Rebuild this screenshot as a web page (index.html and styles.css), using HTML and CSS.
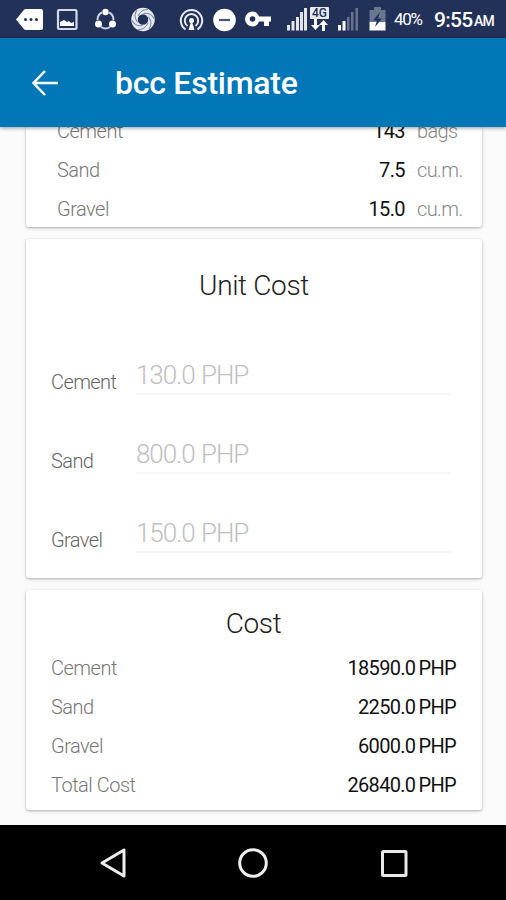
FILE: index.html
```html
<!DOCTYPE html>
<html lang="en">
<head>
<meta charset="utf-8">
<title>bcc Estimate</title>
<link rel="stylesheet" href="styles.css">
</head>
<body>
<div class="screen">
  <div class="status">
    <svg width="28" height="38"><path d="M0 19.500 7 11Q8 9 10 9H25Q27 9 27 11V28Q27 30 25 30H10Q8 30 7 28Z" fill="#fff"/><g fill="#223158"><circle cx="9.500" cy="19.500" r="1.500"/><circle cx="15" cy="19.500" r="1.500"/><circle cx="20.500" cy="19.500" r="1.500"/></g></svg>
    <svg class="picture" width="23" height="38"><rect x="2" y="10" width="18.500" height="19" rx="1" fill="none" stroke="#d5dae8" stroke-width="2.200"/><path d="M4 26V22L8 20 11 22 13 21 15 23 18 22V26Z" fill="#fff"/></svg>
    <svg class="share" width="24" height="38"><path d="M8 12.500Q3.500 14.500 3.500 20M15 12.500Q19.500 14.500 19.500 20M7 27Q11.500 30 16 27" fill="none" stroke="#cbd2e2" stroke-width="2"/><g fill="#fff"><circle cx="11.500" cy="12" r="3.200"/><circle cx="4.500" cy="24" r="3.500"/><circle cx="18.500" cy="24" r="3.500"/></g></svg>
    <svg class="wheel" width="26" height="38"><circle cx="13" cy="19.500" r="8.500" fill="none" stroke="#e6e9f1" stroke-width="6.500"/><g fill="none" stroke="#7d87a0" stroke-width="1"><path id="blade" d="M8 16Q11 9 18 9.500"/><use href="#blade" transform="rotate(60 13 19.500)"/><use href="#blade" transform="rotate(120 13 19.500)"/><use href="#blade" transform="rotate(180 13 19.500)"/><use href="#blade" transform="rotate(240 13 19.500)"/><use href="#blade" transform="rotate(300 13 19.500)"/></g></svg>
    <svg class="hotspot" width="25" height="38"><g fill="none" stroke="#e8ecf5" stroke-width="2"><path d="M6.500 29.500A10.700 10.700 0 1 1 18.500 29.500"/><path d="M8.500 26A6.700 6.700 0 1 1 16.500 26"/></g><circle cx="12.500" cy="20.500" r="2.500" fill="#fff"/><path d="M12.500 20 15.500 30H9.500Z" fill="#fff"/></svg>
    <svg class="minus" width="24" height="38"><circle cx="11.500" cy="20" r="11.300" fill="#fff"/><path d="M6 20H17" stroke="#495575" stroke-width="2.200"/></svg>
    <svg class="key" width="27" height="38"><path fill="#fff" fill-rule="evenodd" d="M7.500 11.500C11 11.500 13 13.500 14 16.500H26V21.500H24V26H19V21.500H14C13 24.500 11 26.500 7.500 26.500A7.500 7.500 0 0 1 7.500 11.500ZM7.500 16.200A2.800 2.800 0 1 0 7.500 21.800 2.800 2.800 0 0 0 7.500 16.200Z"/></svg>
    <svg class="signal" width="22" height="38"><path d="M1 30.500V25H4V30.500ZM5.500 30.500V21H8.500V30.500ZM10 30.500V17H13V30.500ZM14 30.500V12H17V30.500ZM18 30.500V8H21V30.500Z" fill="#e4e5e8"/></svg>
    <span class="network"><span class="network-label">4G</span><svg width="21" height="13"><path d="M5 0H8V6H11L6.500 11 2 6H5ZM13 12V6H10L14.500 1 19 6H16V12Z" fill="#fff"/></svg></span>
    <svg class="signal-two" width="22" height="38"><path d="M1 30.500V25H4V30.500ZM5.500 30.500V21H8.500V30.500Z" fill="#fff"/><path d="M10 30.500V17H12.500V30.500ZM14 30.500V12H16.500V30.500ZM18.500 30.500V8H21V30.500Z" fill="#66728e"/></svg>
    <svg class="battery" width="17" height="38"><path d="M.5 10H5V7H12V10H16.500V22H.5Z" fill="#6a7590"/><path d="M.5 22H16.500V30.500H.5Z" fill="#fff"/><path d="M11 12 4 20.500H8L6 27 13 18.500H9Z" fill="#223158"/></svg>
    <span class="percent">40%</span>
    <span class="clock">9:55</span><span class="ampm">AM</span>
  </div>
  <header class="bar">
    <svg width="28" height="28"><path d="M27 14H3M14 2 2.500 14 14 26" fill="none" stroke="#fff" stroke-width="2.500"/></svg>
    <h1>bcc Estimate</h1>
  </header>
  <main>
    <section class="card quantities">
      <div class="row"><span>Cement</span><b>143</b><i>bags</i></div>
      <div class="row"><span>Sand</span><b>7.5</b><i>cu.m.</i></div>
      <div class="row"><span>Gravel</span><b>15.0</b><i>cu.m.</i></div>
    </section>
    <section class="card unit">
      <h2>Unit Cost</h2>
      <div class="field"><label>Cement</label><div class="input">130.0 PHP</div></div>
      <div class="field"><label>Sand</label><div class="input">800.0 PHP</div></div>
      <div class="field"><label>Gravel</label><div class="input">150.0 PHP</div></div>
    </section>
    <section class="card cost">
      <h2>Cost</h2>
      <div class="row"><span>Cement</span><b>18590.0 PHP</b></div>
      <div class="row"><span>Sand</span><b>2250.0 PHP</b></div>
      <div class="row"><span>Gravel</span><b>6000.0 PHP</b></div>
      <div class="row"><span>Total Cost</span><b>26840.0 PHP</b></div>
    </section>
  </main>
  <nav>
    <svg width="30" height="34"><path d="M26 4V30L4 17Z" fill="none" stroke="#eee" stroke-width="3" stroke-linejoin="round"/></svg>
    <svg width="34" height="34"><circle cx="17" cy="17" r="13.300" fill="none" stroke="#eee" stroke-width="3"/></svg>
    <svg width="34" height="34"><rect x="5.500" y="5.500" width="23.500" height="24" rx="1" fill="none" stroke="#e8e8e8" stroke-width="3"/></svg>
  </nav>
</div>
</body>
</html>
```
FILE: styles.css
```css
* { box-sizing: border-box; }
body { margin: 0; font-family: Roboto, sans-serif; }
.screen { width: 506px; height: 900px; display: flex; flex-direction: column; overflow: hidden; background: #fafafa; }
svg { display: block; flex: none; }

.status { height: 38px; flex: none; display: flex; padding-left: 16px; background: #223158; color: #fff; white-space: nowrap; }
.picture { margin-left: 12px; }
.share { margin-left: 15px; }
.wheel { margin-left: 12px; }
.hotspot { margin-left: 23px; }
.minus { margin-left: 9px; }
.key { margin-left: 8px; }
.signal { margin-left: 14px; }
.network { width: 21px; margin-left: 1px; padding-top: 7px; }
.network-label { display: block; width: 19px; height: 12px; margin-left: 1px; border-radius: 1px; background: #e8eaf0; color: #223158; font-size: 12px; line-height: 12px; font-weight: 500; text-align: center; }
.signal-two { margin-left: 7px; }
.battery { margin-left: 10px; }
.percent { width: 40px; margin-left: 8px; font-size: 17px; line-height: 39px; letter-spacing: -1.3px; }
.clock { width: 40px; font-size: 21px; line-height: 41px; font-weight: 500; letter-spacing: -0.7px; }
.ampm { font-size: 14px; line-height: 43px; font-weight: 500; letter-spacing: -0.7px; }

.bar { height: 89px; flex: none; display: flex; align-items: center; gap: 56px; padding-left: 31px; background: #0277b7; color: #fff; box-shadow: 0 1px 4px rgba(0, 0, 0, .4); z-index: 1; }
h1 { margin: 0; padding-top: 1px; font-size: 32px; line-height: 38px; font-weight: 500; letter-spacing: -0.25px; white-space: nowrap; }

main { height: 698px; flex: none; display: flex; flex-direction: column; gap: 12px; padding: 0 24px 0 26px; overflow: hidden; }
.card { flex: none; background: #fff; border-radius: 3px; box-shadow: 0 1px 3px rgba(0, 0, 0, .32); }
h2 { margin: 0; font-size: 28px; font-weight: 300; letter-spacing: -0.35px; text-align: center; color: #222; }
.row { height: 39px; flex: none; display: flex; align-items: center; font-size: 20px; line-height: 39px; }
.row span { flex: 1; color: #777; font-weight: 300; letter-spacing: -0.5px; }
.row b { color: #111; font-weight: 400; letter-spacing: -0.6px; }
.row i { width: 45px; margin-left: 12px; color: #888; font-style: normal; font-weight: 300; letter-spacing: -0.6px; }

.quantities { height: 100px; display: flex; flex-direction: column; justify-content: flex-end; padding: 0 20px 0 31px; overflow: hidden; }
.quantities .row:last-child { margin-bottom: -2px; }

.unit { height: 339px; padding: 27px 0 0 25px; }
.unit h2 { height: 85px; margin-right: 25px; line-height: 40px; }
.field { height: 79px; display: flex; }
.field label { width: 85px; padding-top: 12px; font-size: 20px; line-height: 39px; font-weight: 300; letter-spacing: -0.6px; color: #666; }
.input { width: 315px; height: 44px; border-bottom: 2px solid #f8f8f8; font-size: 26px; line-height: 48px; font-weight: 300; letter-spacing: -1.05px; word-spacing: 1px; color: #c0c0c0; }

.cost { height: 220px; padding: 14px 26px 0 25px; }
.cost h2 { height: 45px; line-height: 40px; }
.cost .row b { letter-spacing: -0.7px; word-spacing: -1px; }

nav { height: 75px; flex: none; display: flex; align-items: center; justify-content: space-between; padding: 1px 95px 0 98px; background: #000; }
```
